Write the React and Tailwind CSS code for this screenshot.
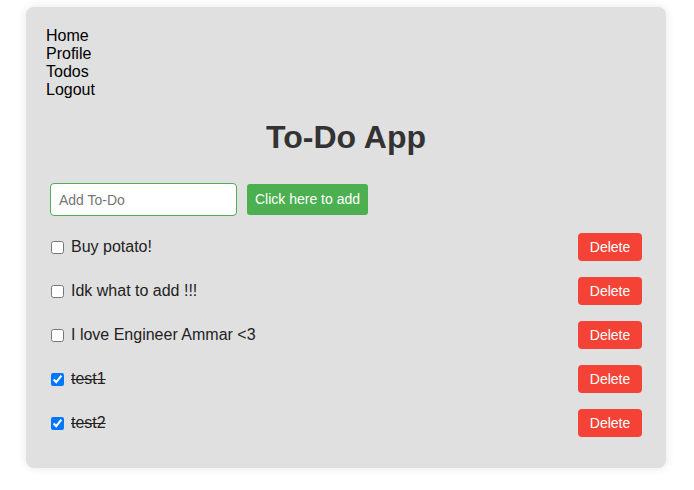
import React from "react";

const todos = [
  { text: "Buy potato!", done: false },
  { text: "Idk what to add !!!", done: false },
  { text: "I love Engineer Ammar <3", done: false },
  { text: "test1", done: true },
  { text: "test2", done: true },
];

export default function App() {
  return (
    <div className="min-h-[490px] bg-white pt-[7px] font-['Liberation_Sans',Arial,sans-serif]">
      <div className="ml-[26px] w-[640px] h-[461px] rounded-[8px] bg-[#e0e0e0] p-[20px] shadow-[0_0_10px_rgba(0,0,0,0.1)]">
        <nav className="text-[16px] leading-[18px] text-black">
          <div>Home</div>
          <div>Profile</div>
          <div>Todos</div>
          <div>Logout</div>
        </nav>
        <h1 className="mt-[20px] text-center text-[32px] leading-[37px] font-bold text-[#333]">To-Do App</h1>
        <div className="mt-[27px] ml-[4px] flex items-center gap-[10px]">
          <input
            type="text"
            placeholder="Add To-Do"
            className="w-[187px] h-[33px] rounded-[4px] border border-[#4caf50] bg-white px-[8px] text-[14px] text-[#333] placeholder:text-[#757575] outline-none"
          />
          <button className="w-[121px] h-[31px] rounded-[3px] bg-[#4caf50] text-[14px] font-medium text-white">
            Click here to add
          </button>
        </div>
        <ul className="mt-[9px]">
          {todos.map((t, i) => (
            <li key={i} className="flex h-[44px] items-center justify-between pr-[4px]">
              <div className="flex items-center">
                <input
                  type="checkbox"
                  defaultChecked={t.done}
                  className="ml-[5px] w-[13px] h-[13px]"
                />
                <span className={"ml-[7px] text-[16px] text-[#222] " + (t.done ? "line-through" : "")}>
                  {t.text}
                </span>
              </div>
              <button className="w-[64px] h-[28px] rounded-[4px] bg-[#f44336] text-[14px] text-white">
                Delete
              </button>
            </li>
          ))}
        </ul>
      </div>
    </div>
  );
}
